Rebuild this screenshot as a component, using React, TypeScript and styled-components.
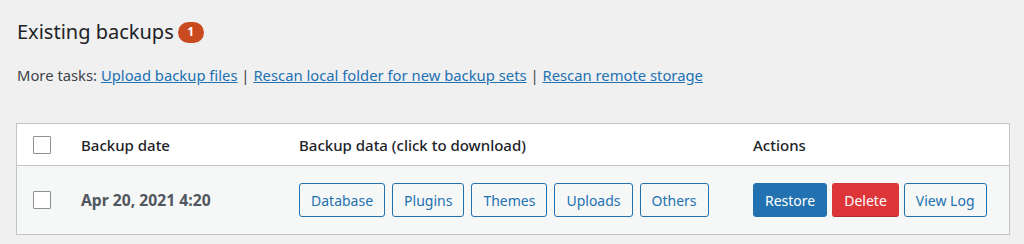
import styled, { createGlobalStyle } from 'styled-components';

const GlobalStyle = createGlobalStyle`
  body {
    margin: 0;
    background: #f0f0f1;
    font-family: "Noto Sans", "Open Sans", sans-serif;
    color: #1d2327;
  }
`;

const Page = styled.div`
  padding: 18px 14px 0 16px;
`;

const Heading = styled.h2`
  margin: 0 0 0 1px;
  display: flex;
  align-items: center;
  gap: 4px;
  font-size: 20px;
  font-weight: 400;
  line-height: 28px;
  color: #1d2327;
`;

const Badge = styled.span`
  display: inline-flex;
  align-items: center;
  justify-content: center;
  min-width: 26px;
  height: 21px;
  border-radius: 11px;
  background: #ca4a1f;
  color: #fff;
  font-size: 12px;
  font-weight: 700;
`;

const Tasks = styled.p`
  margin: 18px 0 0 1px;
  font-size: 14.8px;
  line-height: 22px;
  color: #3c434a;
`;

const TaskLink = styled.a`
  color: #2271b1;
  text-decoration: underline;
  cursor: pointer;
`;

const Table = styled.div`
  margin-top: 37px;
  border: 1px solid #c3c4c7;
  background: #fff;
`;

const Row = styled.div<{ $head?: boolean }>`
  display: grid;
  grid-template-columns: 64px 218px 454px 1fr;
  align-items: center;
  height: ${p => (p.$head ? '41px' : '68px')};
  background: ${p => (p.$head ? '#fff' : '#f6f7f7')};
  border-bottom: ${p => (p.$head ? '1px solid #c3c4c7' : 'none')};
`;

const Cell = styled.div<{ $bold?: boolean; $gap?: number }>`
  font-size: ${p => (p.$bold ? '15.7px' : '15px')};
  font-weight: ${p => (p.$bold ? 700 : 500)};
  color: ${p => (p.$bold ? '#50575e' : '#1d2327')};
  display: flex;
  align-items: center;
  gap: ${p => p.$gap ?? 7}px;
`;

const CheckCell = styled.div`
  padding-left: 16px;
  display: flex;
  align-items: center;
`;

const Check = styled.span`
  width: 16px;
  height: 16px;
  border: 1px solid #8c8f94;
  border-radius: 1px;
  background: #fff;
`;

const Button = styled.button<{ $variant?: 'primary' | 'danger' }>`
  height: 34px;
  padding: 0 11px;
  border-radius: 3px;
  font-family: inherit;
  font-size: 14px;
  cursor: pointer;
  border: 1px solid ${p =>
    p.$variant === 'primary' ? '#2271b1' : p.$variant === 'danger' ? '#d63638' : '#2271b1'};
  border-bottom-color: ${p => (p.$variant === 'danger' ? '#b32d2e' : undefined)};
  background: ${p =>
    p.$variant === 'primary' ? '#2271b1' : p.$variant === 'danger' ? '#dd3538' : '#f6f7f7'};
  color: ${p => (p.$variant ? '#fff' : '#2271b1')};
`;

const dataButtons = ['Database', 'Plugins', 'Themes', 'Uploads', 'Others'];

export default function App() {
  return (
    <>
      <GlobalStyle />
      <Page>
        <Heading>
          Existing backups <Badge>1</Badge>
        </Heading>
        <Tasks>
          More tasks: <TaskLink>Upload backup files</TaskLink> |{' '}
          <TaskLink>Rescan local folder for new backup sets</TaskLink> |{' '}
          <TaskLink>Rescan remote storage</TaskLink>
        </Tasks>
        <Table>
          <Row $head>
            <CheckCell><Check /></CheckCell>
            <Cell>Backup date</Cell>
            <Cell>Backup data (click to download)</Cell>
            <Cell>Actions</Cell>
          </Row>
          <Row>
            <CheckCell><Check /></CheckCell>
            <Cell $bold>Apr 20, 2021 4:20</Cell>
            <Cell>
              {dataButtons.map(b => (
                <Button key={b}>{b}</Button>
              ))}
            </Cell>
            <Cell $gap={5}>
              <Button $variant="primary">Restore</Button>
              <Button $variant="danger">Delete</Button>
              <Button>View Log</Button>
            </Cell>
          </Row>
        </Table>
      </Page>
    </>
  );
}
